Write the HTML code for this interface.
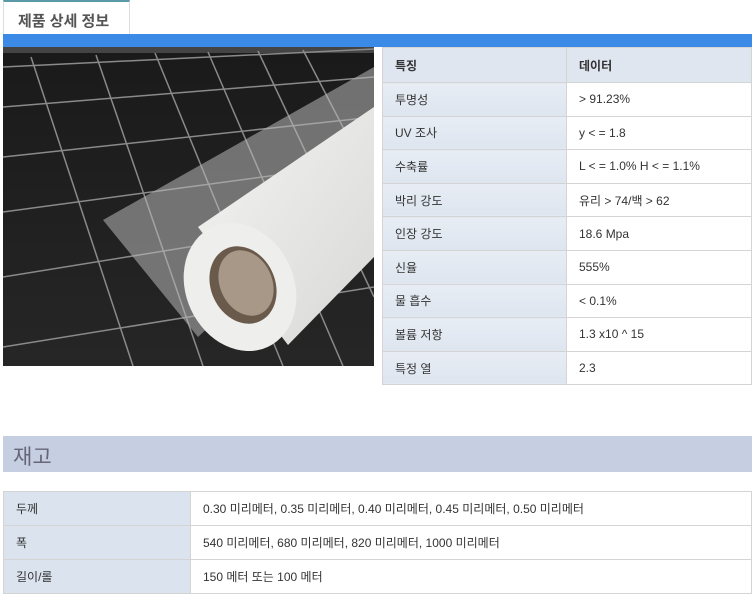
<!DOCTYPE html>
<html><head><meta charset="utf-8"><style>
*{margin:0;padding:0;box-sizing:border-box}
body{width:752px;height:592px;background:#fff;font-family:"Liberation Sans","Noto Sans CJK KR",sans-serif;font-size:12px;color:#333;position:relative;overflow:hidden}
.tab{position:absolute;left:3px;top:0;width:127px;height:35px;border-top:2px solid #5a9aa8;border-left:1px solid #ddd;border-right:1px solid #ddd;background:#fff;font-size:15px;font-weight:bold;color:#555;padding:8px 0 0 14px}
.bar{position:absolute;left:3px;top:34px;width:749px;height:13px;background:#3a8ae6}
.img{position:absolute;left:3px;top:47px}
table{border-collapse:collapse;position:absolute}
td{border:1px solid #d4d4d4;padding:0 12px;vertical-align:middle}
#t1{left:382px;top:47px;width:370px}
#t1 td{height:33.6px}
#t1 td:first-child{width:184px;background:linear-gradient(#e8edf4,#dde5ef)}
#t1 tr:first-child td{background:#dfe6f0;font-weight:bold;height:35px}
.sec{position:absolute;left:3px;top:436px;width:749px;height:36px;background:#c6cee1;font-size:21px;color:#667;padding:5px 0 0 10px}
#t2{left:3px;top:491px;width:749px}
#t2 td{height:34px}
#t2 td:first-child{width:187px;background:#dae3ee}
</style></head><body>
<div class="tab">제품 상세 정보</div>
<div class="bar"></div>
<svg class="img" width="371" height="319" viewBox="0 0 371 319">
<defs><linearGradient id="g" x1="0" y1="0" x2="0" y2="1"><stop offset="0" stop-color="#1a1a1a"/><stop offset="1" stop-color="#262626"/></linearGradient>
<linearGradient id="r" x1="0" y1="0" x2="1" y2="1"><stop offset="0" stop-color="#f4f4f2"/><stop offset="1" stop-color="#d8d8d6"/></linearGradient></defs>
<rect width="371" height="319" fill="url(#g)"/>
<rect width="371" height="6" fill="#444"/>
<g stroke="#8a8a8a" stroke-width="1.5" fill="none">
<path d="M0 20 L371 2"/><path d="M0 60 L371 30"/><path d="M0 110 L371 70"/><path d="M0 165 L371 115"/><path d="M0 230 L371 170"/><path d="M0 300 L371 240"/>
<path d="M28 10 L130 319"/><path d="M93 8 L200 319"/><path d="M152 6 L280 319"/><path d="M205 5 L340 319"/><path d="M255 4 L371 250"/><path d="M300 3 L371 140"/>
</g>
<polygon points="100,173 371,20 371,125 195,290" fill="#b8b8b8" opacity="0.55"/>
<polygon points="195,180 371,60 371,210 285,298" fill="url(#r)"/>
<ellipse cx="237" cy="240" rx="54" ry="66" transform="rotate(-25 237 240)" fill="#eeeeec"/>
<ellipse cx="240" cy="238" rx="32" ry="40" transform="rotate(-25 240 238)" fill="#6a5a4c"/>
<ellipse cx="243" cy="236" rx="26" ry="34" transform="rotate(-25 243 236)" fill="#a89888"/>
</svg>
<table id="t1">
<tr><td>특징</td><td>데이터</td></tr>
<tr><td>투명성</td><td>&gt; 91.23%</td></tr>
<tr><td>UV 조사</td><td>y &lt; = 1.8</td></tr>
<tr><td>수축률</td><td>L &lt; = 1.0% H &lt; = 1.1%</td></tr>
<tr><td>박리 강도</td><td>유리 &gt; 74/백 &gt; 62</td></tr>
<tr><td>인장 강도</td><td>18.6 Mpa</td></tr>
<tr><td>신율</td><td>555%</td></tr>
<tr><td>물 흡수</td><td>&lt; 0.1%</td></tr>
<tr><td>볼륨 저항</td><td>1.3 x10 ^ 15</td></tr>
<tr><td>특정 열</td><td>2.3</td></tr>
</table>
<div class="sec">재고</div>
<table id="t2">
<tr><td>두께</td><td>0.30 미리메터, 0.35 미리메터, 0.40 미리메터, 0.45 미리메터, 0.50 미리메터</td></tr>
<tr><td>폭</td><td>540 미리메터, 680 미리메터, 820 미리메터, 1000 미리메터</td></tr>
<tr><td>길이/롤</td><td>150 메터 또는 100 메터</td></tr>
</table>
</body></html>
